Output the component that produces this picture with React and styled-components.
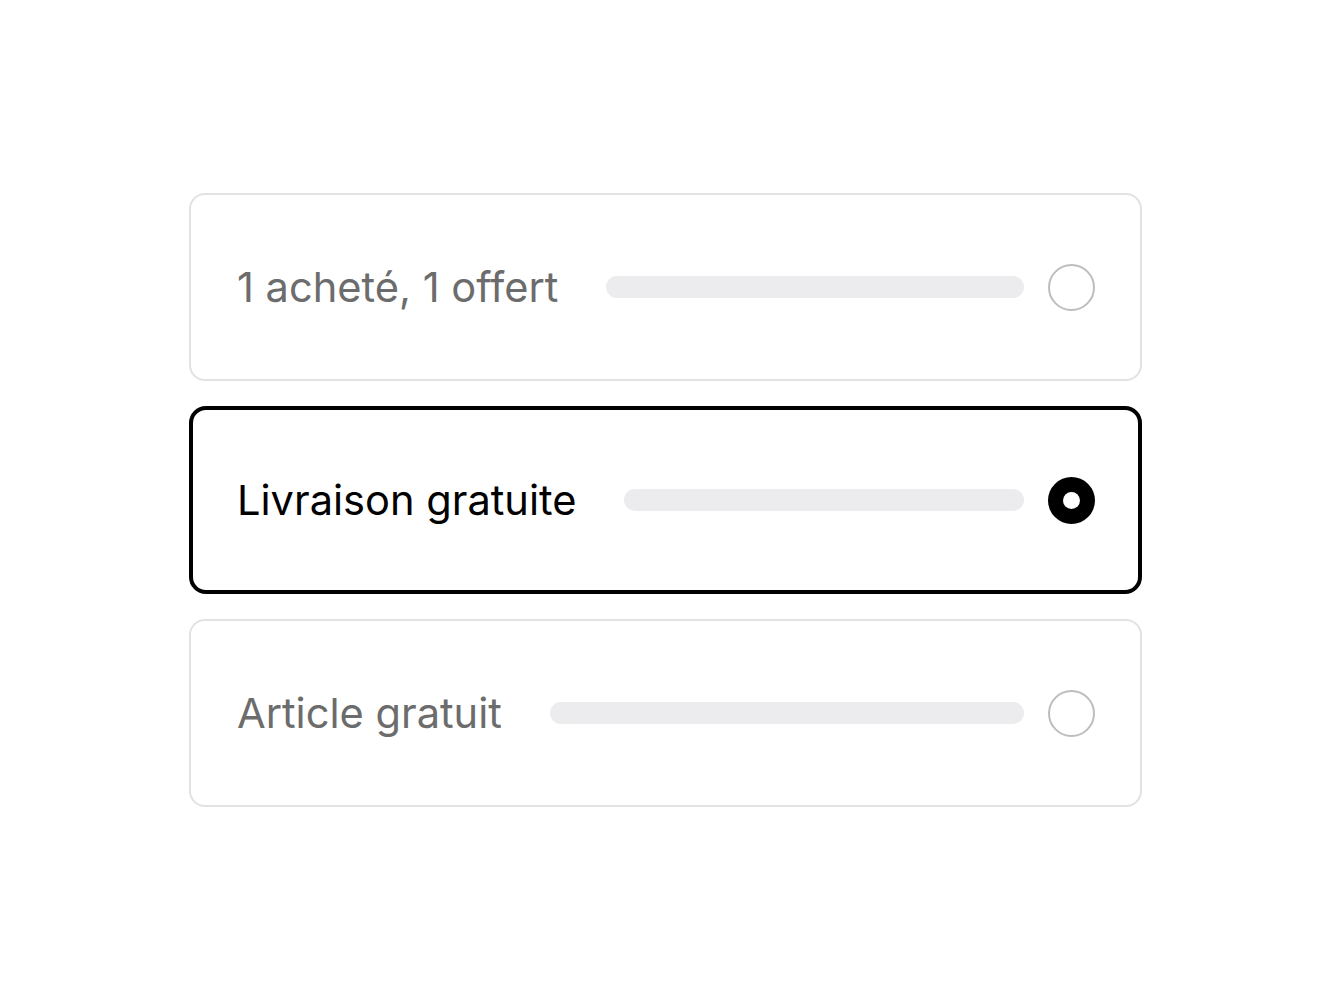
import React from "react";
import styled, { createGlobalStyle } from "styled-components";

const GlobalStyle = createGlobalStyle`
  html, body {
    margin: 0;
    padding: 0;
    background: #ffffff;
  }
  body {
    font-family: Inter, "Noto Sans", sans-serif;
  }
`;

const Page = styled.div`
  width: 1333px;
  height: 1000px;
  box-sizing: border-box;
  padding: 193px 0 0 189px;
  display: flex;
`;

const List = styled.div`
  width: 953px;
  display: flex;
  flex-direction: column;
  gap: 25px;
`;

const Card = styled.div`
  box-sizing: border-box;
  height: 188px;
  display: flex;
  align-items: center;
  gap: 48px;
  border: ${(p) => (p.$selected ? "4px solid #000" : "2px solid #e2e2e2")};
  border-radius: ${(p) => (p.$selected ? "17px" : "16px")};
  padding: 0 ${(p) => (p.$selected ? 43 : 45)}px 0
    ${(p) => (p.$selected ? 44 : 46)}px;
  background: #fff;
`;

const Label = styled.span`
  font-size: 41.6px;
  font-weight: 400;
  color: ${(p) => (p.$selected ? "#000" : "#6c6c6c")};
  white-space: nowrap;
`;

const Right = styled.div`
  flex: 1;
  display: flex;
  align-items: center;
  gap: 24px;
`;

const Bar = styled.div`
  flex: 1;
  height: 22px;
  border-radius: 11px;
  background: #ececee;
`;

const Radio = styled.div`
  box-sizing: border-box;
  width: 47px;
  height: 47px;
  flex: none;
  border-radius: 50%;
  display: flex;
  align-items: center;
  justify-content: center;
  border: ${(p) => (p.$selected ? "none" : "2.5px solid #bdbdbd")};
  background: ${(p) => (p.$selected ? "#000" : "#fff")};
`;

const Dot = styled.div`
  width: 17px;
  height: 17px;
  border-radius: 50%;
  background: #fff;
`;

const options = [
  { label: "1 acheté, 1 offert", selected: false },
  { label: "Livraison gratuite", selected: true },
  { label: "Article gratuit", selected: false },
];

export default function App() {
  return (
    <>
      <GlobalStyle />
      <Page>
        <List>
          {options.map((o) => (
            <Card key={o.label} $selected={o.selected}>
              <Label $selected={o.selected}>{o.label}</Label>
              <Right>
                <Bar />
                <Radio $selected={o.selected}>{o.selected && <Dot />}</Radio>
              </Right>
            </Card>
          ))}
        </List>
      </Page>
    </>
  );
}
